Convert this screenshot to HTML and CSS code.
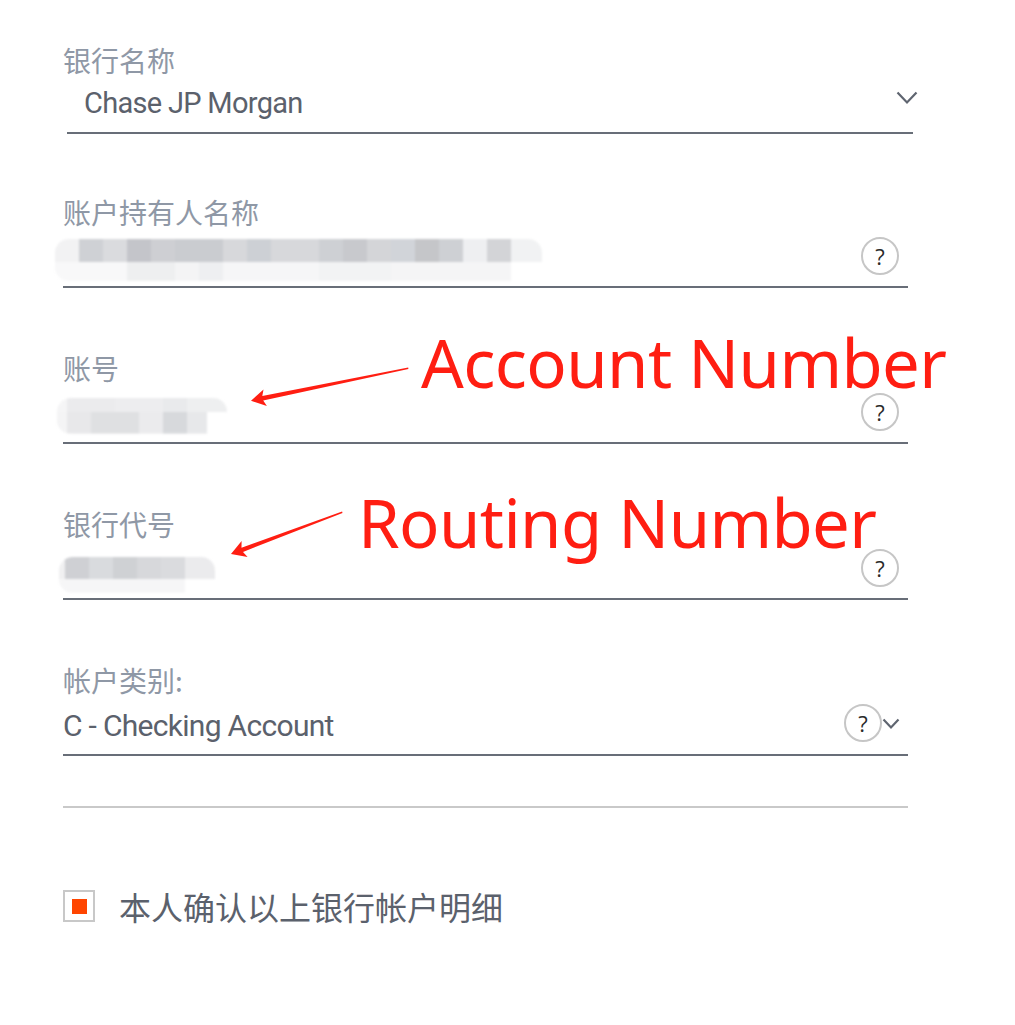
FILE: index.html
```html
<!DOCTYPE html>
<html lang="zh">
<head>
<meta charset="utf-8">
<title>银行账户</title>
<link rel="stylesheet" href="styles.css">
</head>
<body>
<div class="page">
  <form class="form">
    <div class="field field-bank">
      <div class="label">银行名称</div>
      <div class="row">
        <span class="value">Chase JP Morgan</span>
        <svg class="chev" width="22" height="14" viewBox="0 0 22 14"><path d="M1.5 1.5 L11 11.5 L20.5 1.5" fill="none" stroke="#5f6570" stroke-width="2.2"/></svg>
      </div>
    </div>

    <div class="field">
      <div class="label">账户持有人名称</div>
      <div class="row">
        <div class="mosaic mosaic-name"></div>
        <span class="help">?</span>
      </div>
    </div>

    <div class="field">
      <div class="label">账号</div>
      <div class="row">
        <div class="mosaic mosaic-acct"></div>
        <span class="help">?</span>
      </div>
    </div>

    <div class="field">
      <div class="label">银行代号</div>
      <div class="row">
        <div class="mosaic mosaic-route"></div>
        <span class="help">?</span>
      </div>
    </div>

    <div class="field">
      <div class="label">帐户类别:</div>
      <div class="row">
        <span class="value">C - Checking Account</span>
        <span class="help help-type">?</span>
        <svg class="chev chev-small" width="18" height="12" viewBox="0 0 18 12"><path d="M1.5 1.5 L9 9.5 L16.5 1.5" fill="none" stroke="#5f6570" stroke-width="2.2"/></svg>
      </div>
    </div>

    <div class="rule"></div>

    <label class="confirm">
      <span class="box"><span class="tick"></span></span>
      <span class="confirm-text">本人确认以上银行帐户明细</span>
    </label>
  </form>

  <div class="note note-account">Account Number</div>
  <div class="note note-routing">Routing Number</div>
  <svg class="arrows" width="1015" height="1025" viewBox="0 0 1015 1025">
    <polygon fill="#ff1e12" points="251,400.7 263.5,389.4 262.3,396.1 408.2,367.6 408.4,369 263.2,400.4 266.9,406.1"/>
    <polygon fill="#ff1e12" points="231,554 241.6,541 241.5,547.7 342.1,511.6 342.5,513 243,551.9 247.6,556.9"/>
  </svg>
</div>
</body>
</html>
```

FILE: styles.css
```css
* { box-sizing: border-box; }
html, body { margin: 0; padding: 0; background: #ffffff; }
body {
  font-family: Roboto, "Noto Sans CJK SC", sans-serif;
}
.page {
  position: relative;
  width: 1015px;
  height: 1025px;
  overflow: hidden;
}
.form {
  padding: 42px 0 0 63px;
  width: 908px;
}
.field {
  display: flex;
  flex-direction: column;
  margin-bottom: 62px;
}
.label {
  font-family: "Noto Sans CJK SC", sans-serif;
  font-size: 28px;
  line-height: 36px;
  color: #8f98a6;
}
.row {
  position: relative;
  display: flex;
  align-items: center;
  height: 58px;
  border-bottom: 2px solid #686e78;
}
.field-bank { margin-bottom: 60px; }
.field-bank .row {
  margin-left: 4px;
  width: 846px;
  height: 56px;
  padding-left: 17px;
  padding-bottom: 4px;
}
.value {
  flex: 1;
  font-family: Roboto, "Noto Sans CJK SC", sans-serif;
  font-size: 30px;
  letter-spacing: -0.7px;
  line-height: 34px;
  color: #5b616c;
}
.field-bank .value { font-size: 29px; letter-spacing: -0.7px; }
.chev { flex: none; margin-right: -4px; margin-top: -12px; }
.field-bank .chev { margin-right: -5px; margin-top: -10px; }
.chev-small { margin-right: 8px; margin-top: -4px; }
.help {
  flex: none;
  margin-left: auto;
  margin-right: 9px;
  margin-top: -4px;
  width: 38px;
  height: 38px;
  border: 2px solid #c6c6c6;
  border-radius: 50%;
  display: flex;
  align-items: center;
  justify-content: center;
  font-family: "Open Sans", "Noto Sans", sans-serif;
  font-size: 22px;
  line-height: 1;
  color: #2a2a2a;
}
.help-type { margin-right: 0; margin-top: -6px; }

.mosaic {
  flex: none;
  margin-left: -8px;
  border-radius: 14px;
  filter: blur(1.2px);
}
.mosaic-name {
  width: 487px;
  height: 42px;
  margin-top: 4px;
  background:
    linear-gradient(90deg, #f2f2f3 0 24px, #cfd1d5 24px 48px, #dadbde 48px 72px, #c4c5ca 72px 96px, #cecfd3 96px 120px, #caccd0 120px 168px, #d7d8db 168px 192px, #cdd0d5 192px 216px, #d7d8db 216px 264px, #ced0d4 264px 288px, #c8c9cd 288px 312px, #d4d5d8 312px 336px, #d1d4d9 336px 360px, #c5c6c9 360px 384px, #ced0d4 384px 408px, #eeeff1 408px 432px, #d3d4d7 432px 456px, #f1f2f3 456px) top / 100% 55% no-repeat,
    linear-gradient(90deg, #f8f8f9 0 72px, #eeeff0 72px 120px, #f4f4f5 120px 144px, #eeeff1 144px 168px, #f6f6f7 168px 264px, #f2f3f4 264px 336px, #f5f5f6 336px 456px, #ffffff 456px) bottom / 100% 45% no-repeat;
}
.mosaic-acct {
  width: 170px;
  height: 36px;
  margin-top: 4px;
  margin-left: -6px;
  background:
    linear-gradient(90deg, #f5f5f6 0 10px, #ebebed 10px 58px, #ededef 58px 106px, #e9eaec 106px 130px, #eeeff0 130px) top / 100% 40% no-repeat,
    linear-gradient(90deg, #f4f4f5 0 10px, #e8e8ea 10px 34px, #dfe0e2 34px 82px, #ebebed 82px 106px, #d7d9dc 106px 130px, #e7e8ea 130px 150px, #ffffff 150px) bottom / 100% 60% no-repeat;
}
.mosaic-route {
  width: 156px;
  height: 36px;
  margin-top: 10px;
  margin-left: -4px;
  background:
    linear-gradient(90deg, #f0f0f1 0 6px, #cfd0d4 6px 30px, #d9dbde 30px 54px, #cfd1d4 54px 78px, #d7d8db 78px 102px, #dadbde 102px 126px, #ebebed 126px) top / 100% 62% no-repeat,
    linear-gradient(90deg, #f6f6f7 0 126px, #ffffff 126px) bottom / 100% 38% no-repeat;
}
.rule {
  margin-top: -12px;
  border-bottom: 2px solid #c9c9c9;
}
.confirm {
  display: flex;
  align-items: center;
  margin-top: 78px;
}
.box {
  width: 32px;
  height: 32px;
  border: 2px solid #c8c8c8;
  display: flex;
  align-items: center;
  justify-content: center;
}
.tick {
  width: 15px;
  height: 15px;
  background: #ff4500;
}
.confirm-text {
  margin-left: 24px;
  font-family: "Noto Sans CJK SC", sans-serif;
  font-size: 32px;
  line-height: 40px;
  color: #5b616c;
}

.note {
  position: absolute;
  font-family: "Noto Sans", "Open Sans", sans-serif;
  font-size: 67px;
  letter-spacing: -0.6px;
  line-height: 52px;
  color: #ff1e12;
  white-space: nowrap;
}
.note-account { left: 421px; top: 336px; }
.note-routing { left: 358px; top: 496px; }
.arrows {
  position: absolute;
  left: 0;
  top: 0;
  pointer-events: none;
}
```
